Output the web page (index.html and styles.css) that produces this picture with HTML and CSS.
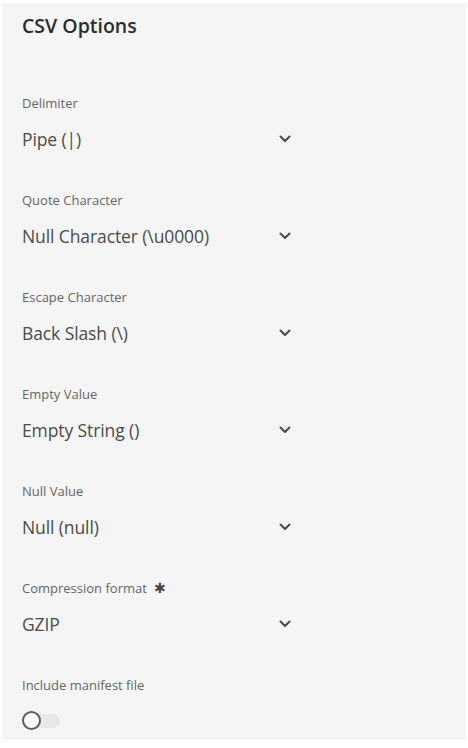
FILE: index.html
```html
<!DOCTYPE html>
<html lang="en">
  <head>
    <meta charset="UTF-8" />
    <meta name="viewport" content="width=device-width, initial-scale=1.0" />
    <title>CSV Options</title>
    <link rel="stylesheet" href="styles.css">
  </head>
  <body>
    <div class="panel">
      <h2 class="panel__title">CSV Options</h2>

      <div class="field">
        <div class="field__label">Delimiter</div>
        <div class="picker">
          <span class="picker__value">Pipe (|)</span>
          <svg class="chevron" viewBox="0 0 12 8"><path d="M1.5 1.5 L6 6 L10.5 1.5" /></svg>
        </div>
      </div>

      <div class="field">
        <div class="field__label">Quote Character</div>
        <div class="picker">
          <span class="picker__value">Null Character (\u0000)</span>
          <svg class="chevron" viewBox="0 0 12 8"><path d="M1.5 1.5 L6 6 L10.5 1.5" /></svg>
        </div>
      </div>

      <div class="field">
        <div class="field__label">Escape Character</div>
        <div class="picker">
          <span class="picker__value">Back Slash (\)</span>
          <svg class="chevron" viewBox="0 0 12 8"><path d="M1.5 1.5 L6 6 L10.5 1.5" /></svg>
        </div>
      </div>

      <div class="field">
        <div class="field__label">Empty Value</div>
        <div class="picker">
          <span class="picker__value">Empty String ()</span>
          <svg class="chevron" viewBox="0 0 12 8"><path d="M1.5 1.5 L6 6 L10.5 1.5" /></svg>
        </div>
      </div>

      <div class="field">
        <div class="field__label">Null Value</div>
        <div class="picker">
          <span class="picker__value">Null (null)</span>
          <svg class="chevron" viewBox="0 0 12 8"><path d="M1.5 1.5 L6 6 L10.5 1.5" /></svg>
        </div>
      </div>

      <div class="field">
        <div class="field__label">Compression format <span class="required">&#10033;</span></div>
        <div class="picker">
          <span class="picker__value">GZIP</span>
          <svg class="chevron" viewBox="0 0 12 8"><path d="M1.5 1.5 L6 6 L10.5 1.5" /></svg>
        </div>
      </div>

      <div class="field field--last">
        <div class="field__label">Include manifest file</div>
        <div class="switch">
          <span class="switch__handle"></span>
        </div>
      </div>
    </div>
  </body>
</html>
```

FILE: styles.css
```css
* {
  margin: 0;
  padding: 0;
  box-sizing: border-box;
}

body {
  background: #fff;
  font-family: "Open Sans", "Noto Sans", sans-serif;
  padding: 3px 2px 9px 2px;
}

.panel {
  background: #f5f5f5;
  border-bottom: 1px solid #ececec;
  padding: 13px 20px 14px 20px;
  height: 736px;
}

.panel__title {
  font-size: 19.5px;
  font-weight: 600;
  color: #2c2c2c;
  line-height: 20px;
  margin-bottom: 58px;
}

.field {
  height: 97px;
}

.field__label {
  font-size: 13px;
  color: #666;
  line-height: 18px;
  height: 18px;
}

.required {
  font-size: 14px;
  color: #444;
  margin-left: 4px;
}

.picker {
  display: flex;
  align-items: center;
  width: 269px;
  height: 40px;
  margin-top: 7px;
}

.picker__value {
  flex: 1;
  font-size: 17.5px;
  color: #4b4b4b;
  letter-spacing: -0.1px;
}

.chevron {
  width: 12px;
  height: 8px;
  fill: none;
  stroke: #4b4b4b;
  stroke-width: 2;
  stroke-linecap: round;
  stroke-linejoin: round;
}

.switch {
  position: relative;
  width: 37px;
  height: 14px;
  margin-top: 20px;
  margin-left: 1px;
  border-radius: 7px;
  background: #e8e8e8;
}

.switch__handle {
  position: absolute;
  left: -1px;
  top: -3px;
  width: 19px;
  height: 19px;
  border-radius: 50%;
  background: #fafafa;
  border: 2px solid #5e5e5e;
}
```
